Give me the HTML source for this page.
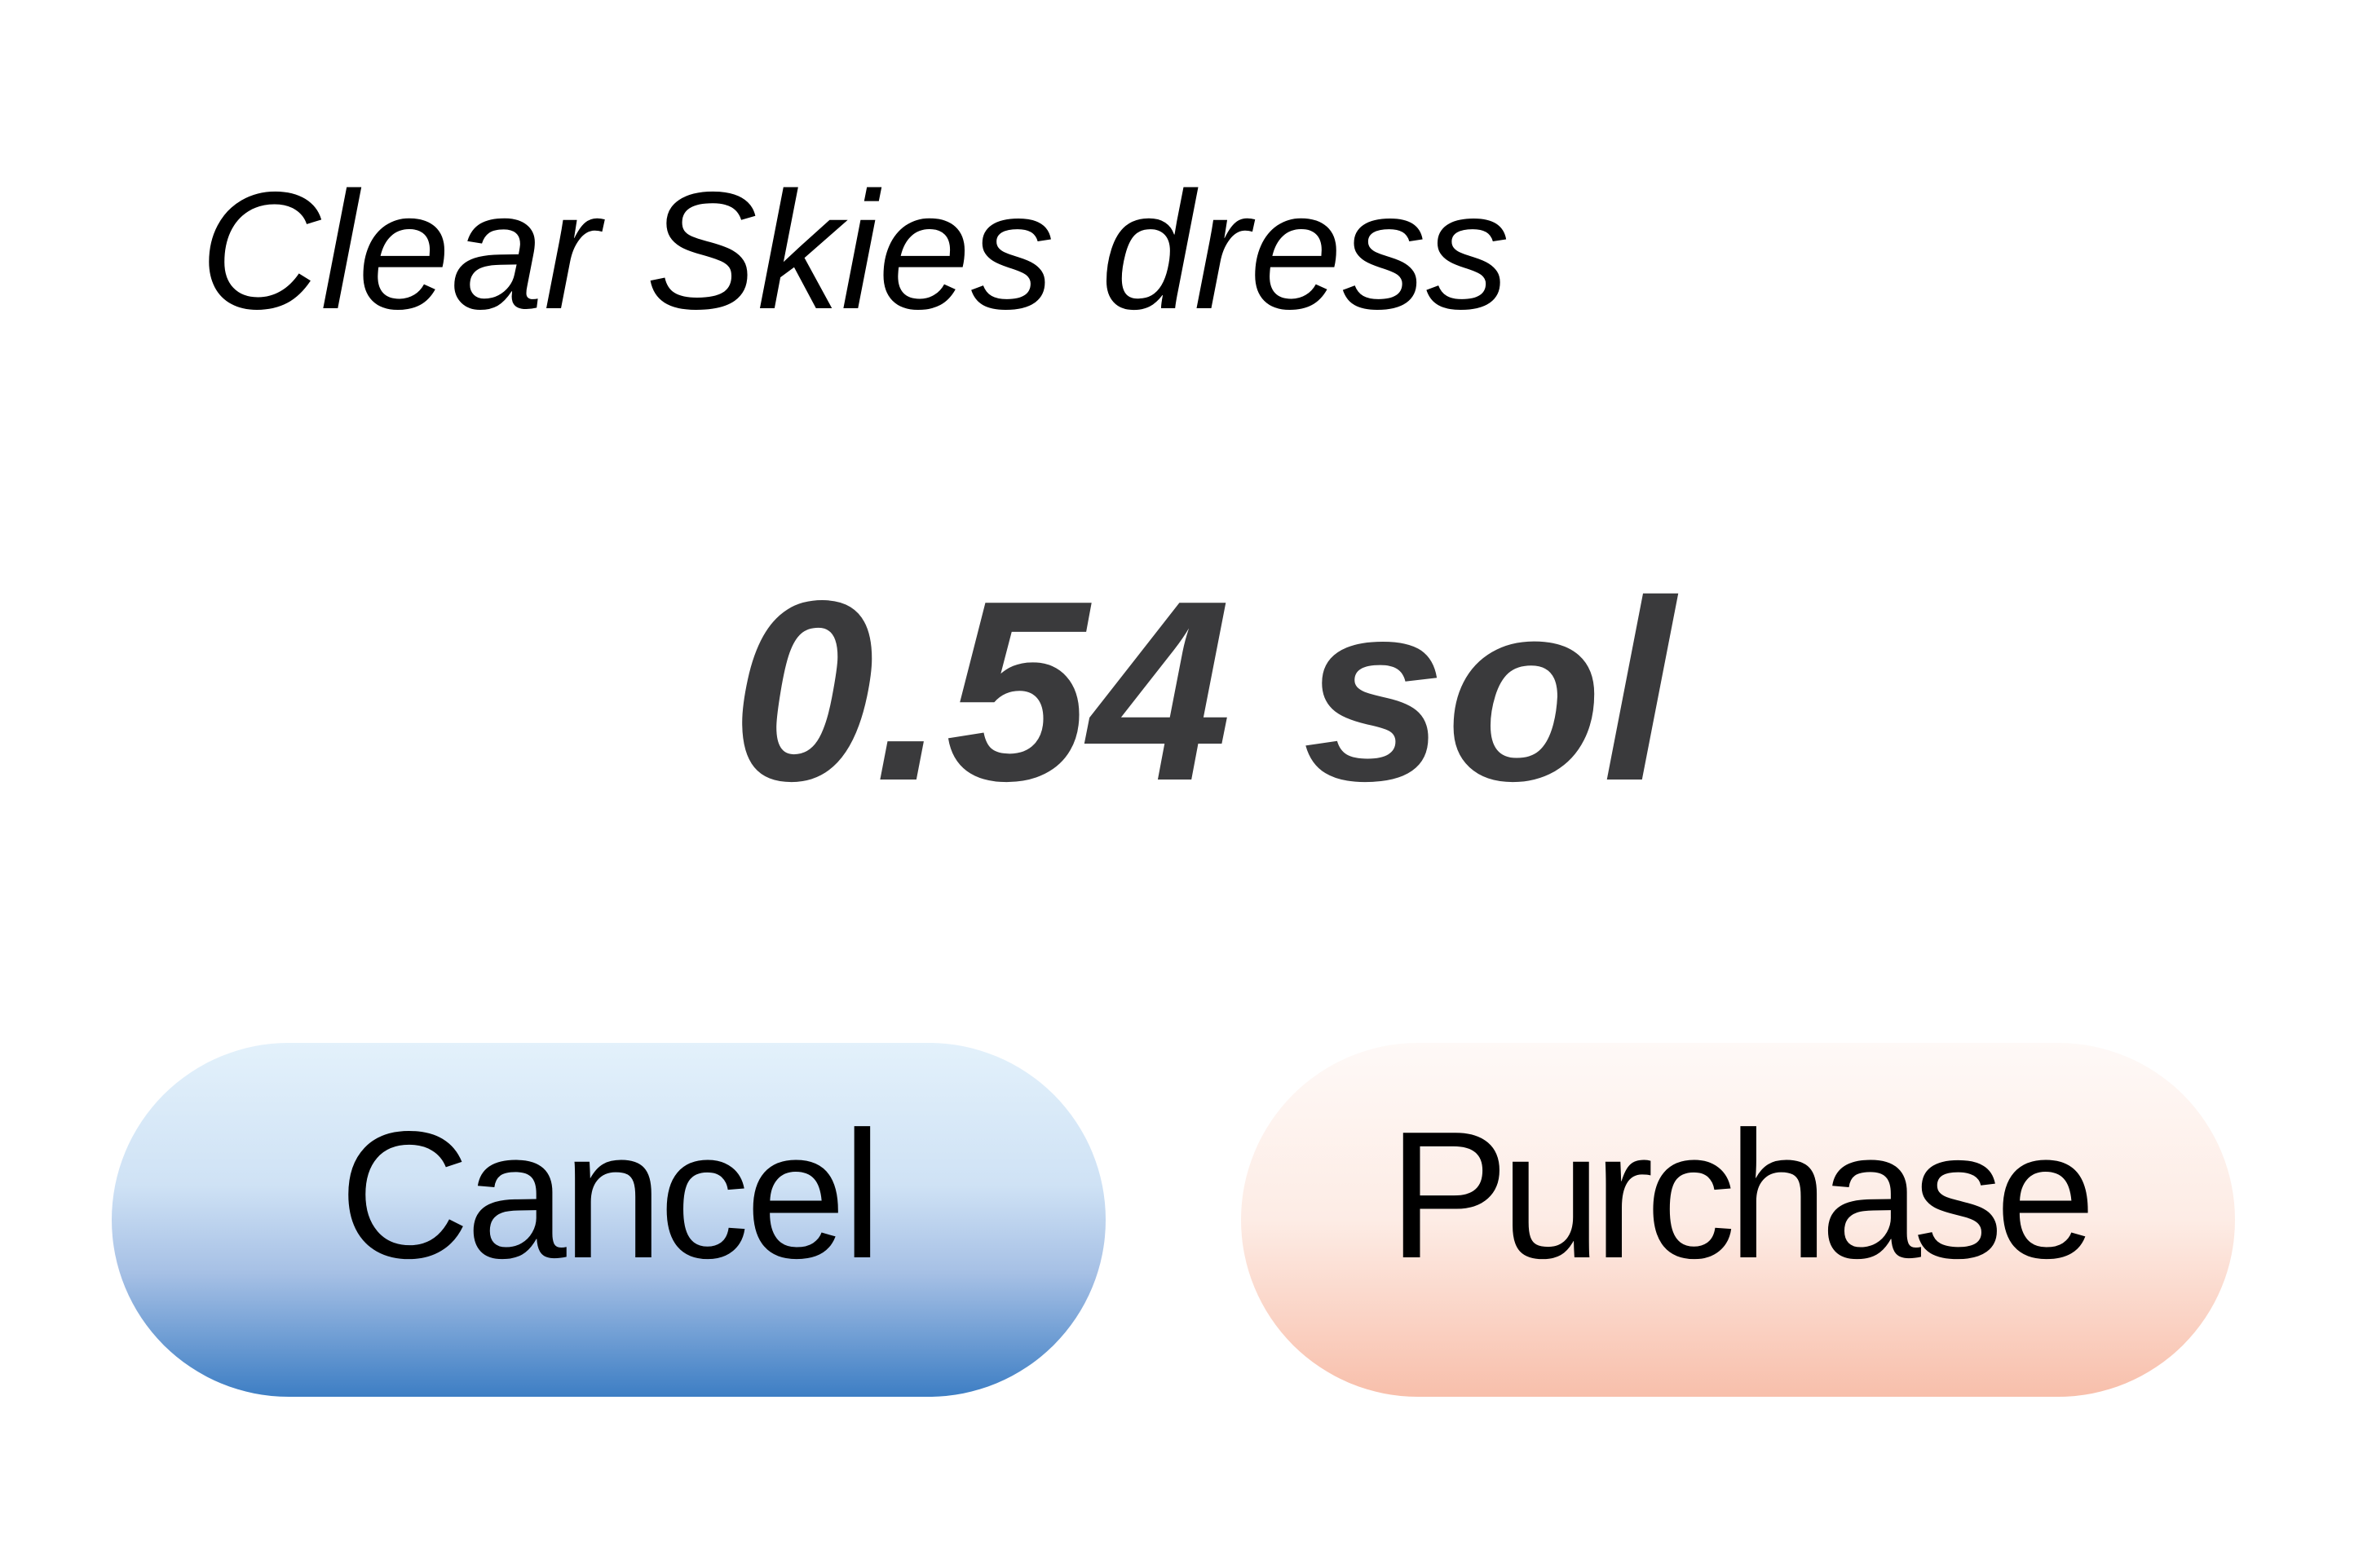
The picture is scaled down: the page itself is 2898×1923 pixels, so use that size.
<!DOCTYPE html>
<html><head><style>
html,body{margin:0;padding:0;background:#fff;width:2898px;height:1923px;overflow:hidden;position:relative;font-family:"Liberation Sans",sans-serif}
.t{position:absolute;left:245px;top:205px;font-size:205px;font-style:italic;color:#000;line-height:1;white-space:nowrap;letter-spacing:0px}
.p{position:absolute;left:0;width:2898px;top:690px;text-align:center;font-size:315px;font-weight:bold;font-style:italic;color:#3a3a3c;line-height:1;white-space:nowrap;padding-left:52px;box-sizing:border-box}
.b{position:absolute;top:1279px;width:1219px;height:434px;border-radius:217px;display:flex;align-items:center;justify-content:center;font-size:222px;color:#000;box-sizing:border-box;padding-bottom:60px}
.c{left:137px;background:linear-gradient(#e3f1fb,#cfe2f5 40%,#a6c0e5 65%,#3d7ec4);letter-spacing:-5px}
.u{left:1522px;background:linear-gradient(#fef9f7,#fdece5 50%,#f8bfab);letter-spacing:-10px}
</style></head><body>
<div class="t">Clear Skies dress</div>
<div class="p">0.54 sol</div>
<div class="b c">Cancel</div>
<div class="b u">Purchase</div>
</body></html>
